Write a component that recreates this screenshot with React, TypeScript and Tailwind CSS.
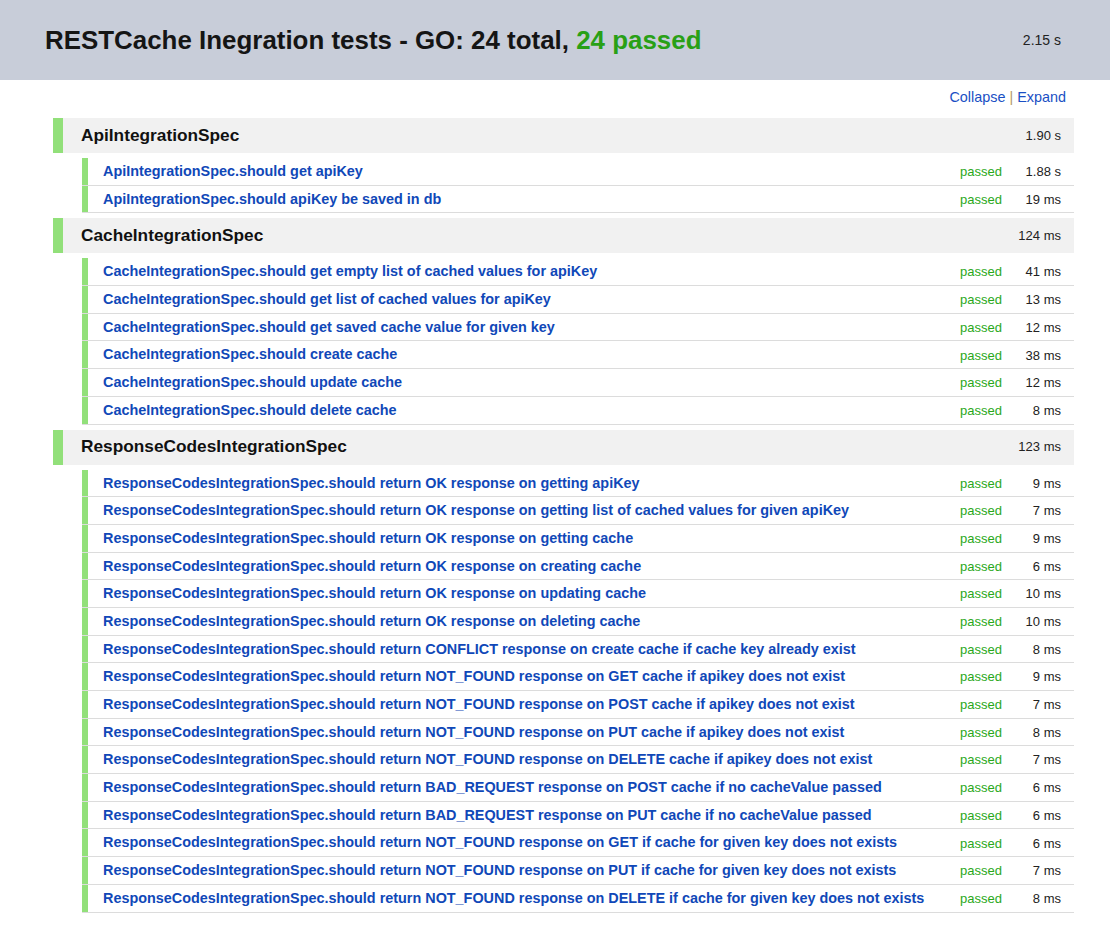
import React from 'react';

type Test = { name: string; time: string };
type Suite = { name: string; time: string; tests: Test[] };

const suites: Suite[] = [
  {
    name: 'ApiIntegrationSpec',
    time: '1.90 s',
    tests: [
      { name: 'ApiIntegrationSpec.should get apiKey', time: '1.88 s' },
      { name: 'ApiIntegrationSpec.should apiKey be saved in db', time: '19 ms' },
    ],
  },
  {
    name: 'CacheIntegrationSpec',
    time: '124 ms',
    tests: [
      { name: 'CacheIntegrationSpec.should get empty list of cached values for apiKey', time: '41 ms' },
      { name: 'CacheIntegrationSpec.should get list of cached values for apiKey', time: '13 ms' },
      { name: 'CacheIntegrationSpec.should get saved cache value for given key', time: '12 ms' },
      { name: 'CacheIntegrationSpec.should create cache', time: '38 ms' },
      { name: 'CacheIntegrationSpec.should update cache', time: '12 ms' },
      { name: 'CacheIntegrationSpec.should delete cache', time: '8 ms' },
    ],
  },
  {
    name: 'ResponseCodesIntegrationSpec',
    time: '123 ms',
    tests: [
      { name: 'ResponseCodesIntegrationSpec.should return OK response on getting apiKey', time: '9 ms' },
      { name: 'ResponseCodesIntegrationSpec.should return OK response on getting list of cached values for given apiKey', time: '7 ms' },
      { name: 'ResponseCodesIntegrationSpec.should return OK response on getting cache', time: '9 ms' },
      { name: 'ResponseCodesIntegrationSpec.should return OK response on creating cache', time: '6 ms' },
      { name: 'ResponseCodesIntegrationSpec.should return OK response on updating cache', time: '10 ms' },
      { name: 'ResponseCodesIntegrationSpec.should return OK response on deleting cache', time: '10 ms' },
      { name: 'ResponseCodesIntegrationSpec.should return CONFLICT response on create cache if cache key already exist', time: '8 ms' },
      { name: 'ResponseCodesIntegrationSpec.should return NOT_FOUND response on GET cache if apikey does not exist', time: '9 ms' },
      { name: 'ResponseCodesIntegrationSpec.should return NOT_FOUND response on POST cache if apikey does not exist', time: '7 ms' },
      { name: 'ResponseCodesIntegrationSpec.should return NOT_FOUND response on PUT cache if apikey does not exist', time: '8 ms' },
      { name: 'ResponseCodesIntegrationSpec.should return NOT_FOUND response on DELETE cache if apikey does not exist', time: '7 ms' },
      { name: 'ResponseCodesIntegrationSpec.should return BAD_REQUEST response on POST cache if no cacheValue passed', time: '6 ms' },
      { name: 'ResponseCodesIntegrationSpec.should return BAD_REQUEST response on PUT cache if no cacheValue passed', time: '6 ms' },
      { name: 'ResponseCodesIntegrationSpec.should return NOT_FOUND response on GET if cache for given key does not exists', time: '6 ms' },
      { name: 'ResponseCodesIntegrationSpec.should return NOT_FOUND response on PUT if cache for given key does not exists', time: '7 ms' },
      { name: 'ResponseCodesIntegrationSpec.should return NOT_FOUND response on DELETE if cache for given key does not exists', time: '8 ms' },
    ],
  },
];

function SuiteBlock({ suite }: { suite: Suite }) {
  return (
    <div className="mb-[5px]">
      <div className="flex h-[35px] items-center border-l-[10px] border-[#92e07a] bg-[#f1f1f1] pl-[18px] pr-[13px]">
        <span className="flex-1 text-[17.28px] font-bold text-[#111]">{suite.name}</span>
        <span className="text-[13px] text-[#222]">{suite.time}</span>
      </div>
      <div className="mt-[5px] ml-[29px]">
        {suite.tests.map((t) => (
          <div
            key={t.name}
            className="box-border flex h-[27.7px] items-center border-b border-[#dcdcdc] pr-[13px]"
          >
            <div className="flex h-full flex-1 items-center border-l-[6px] border-[#92e07a] pl-[15px] pt-px">
              <a href="#" className="text-[14.4px] font-bold text-[#1048b8]">
                {t.name}
              </a>
            </div>
            <span className="pt-px text-[13px] text-[#2aa81a]">passed</span>
            <span className="w-[59px] pt-px text-right text-[13px] text-[#222]">{t.time}</span>
          </div>
        ))}
      </div>
    </div>
  );
}

export default function App() {
  return (
    <div className="min-h-screen bg-white font-['Liberation_Sans',Arial,sans-serif]">
      <header className="flex h-[80px] items-center bg-[#c8cdd9] pl-[45px] pr-[49px]">
        <h1 className="flex-1 text-[25.92px] font-bold text-[#151515]">
          RESTCache Inegration tests - GO: 24 total, <span className="text-[#29a016]">24 passed</span>
        </h1>
        <span className="text-[14px] text-[#222]">2.15 s</span>
      </header>
      <div className="ml-[53px] mr-[36px] pb-4">
        <div className="flex h-[38px] items-start justify-end pt-[7px] pr-[8px] text-[14.4px]">
          <a href="#" className="text-[#1a4fc4]">Collapse</a>
          <span className="mx-[4px] text-[#b49a6a]">|</span>
          <a href="#" className="text-[#1a4fc4]">Expand</a>
        </div>
        {suites.map((s) => (
          <SuiteBlock key={s.name} suite={s} />
        ))}
      </div>
    </div>
  );
}
